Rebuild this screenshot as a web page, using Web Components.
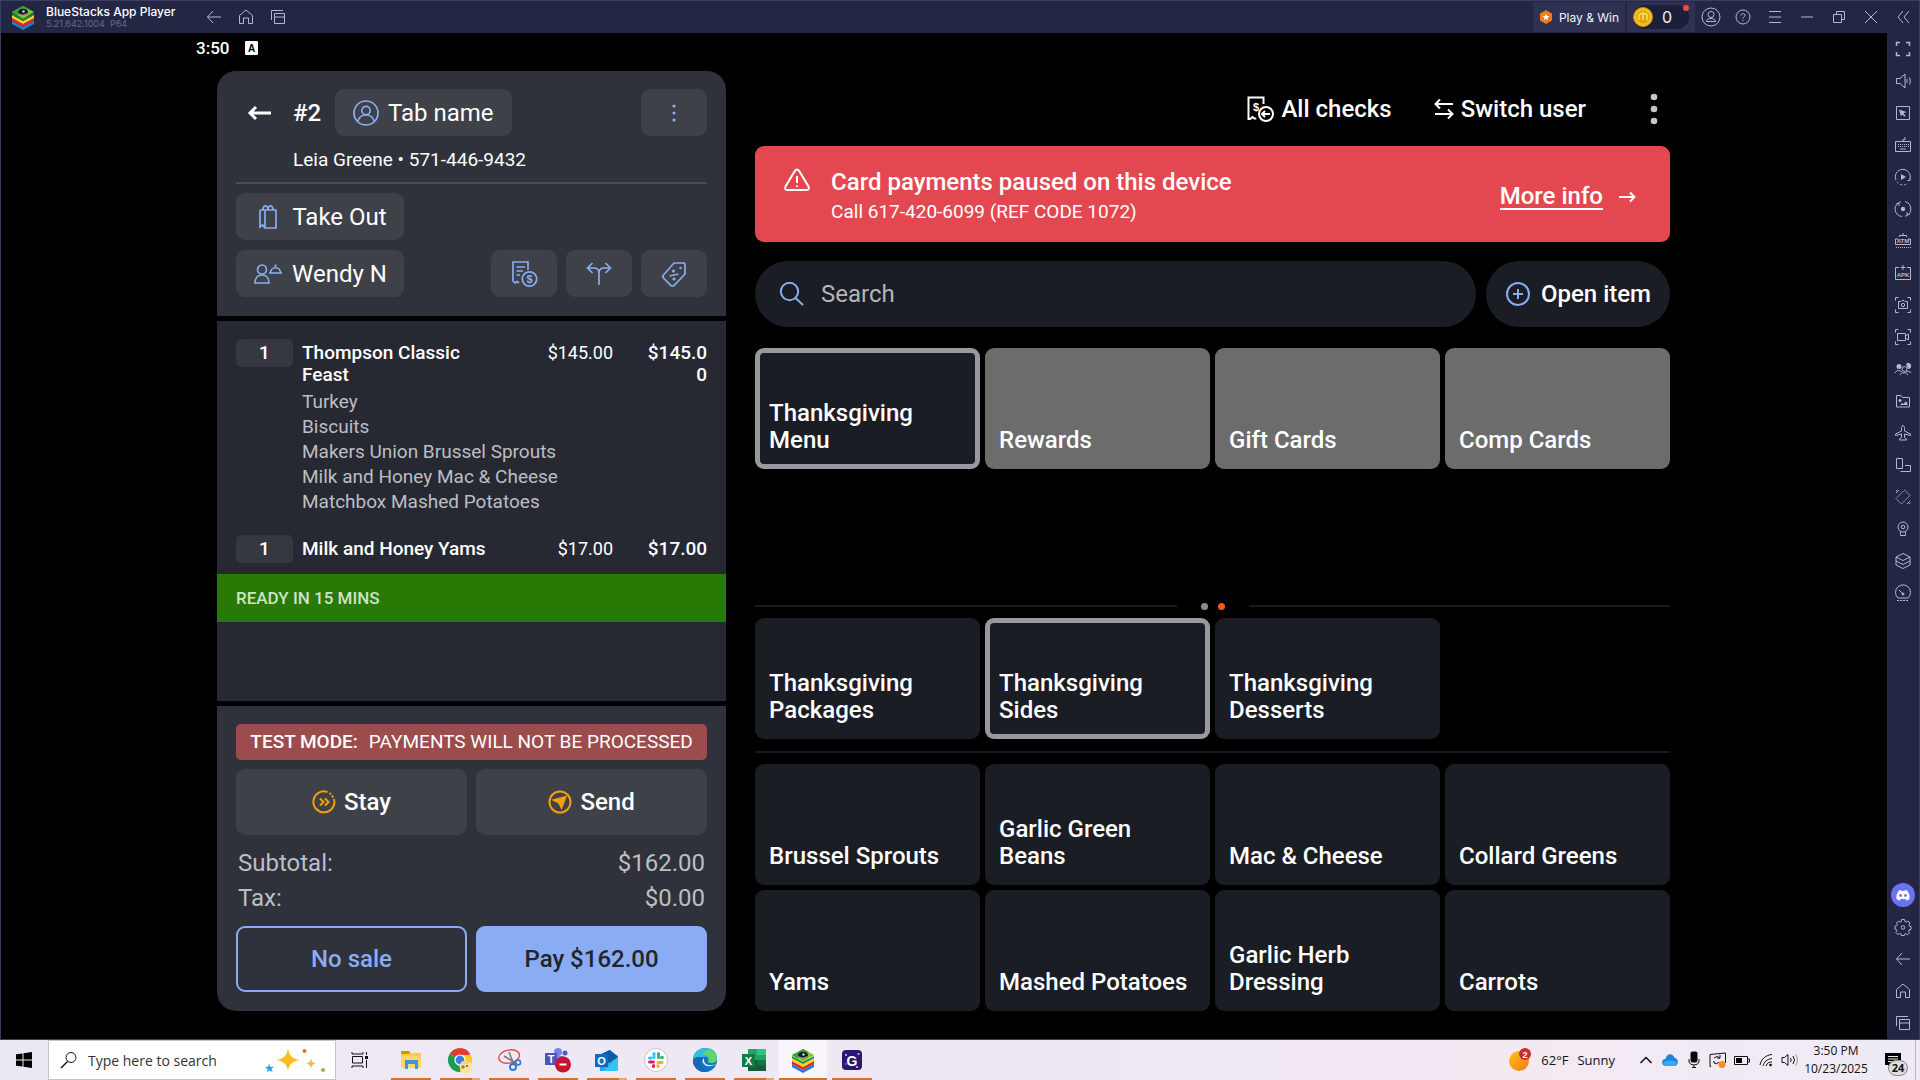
<!DOCTYPE html>
<html lang="en">
<head>
<meta charset="utf-8">
<title>BlueStacks App Player</title>
<style>
  html, body { height: 100%; margin: 0; }
  body {
    display: grid;
    grid-template-rows: 1fr 40px;
    background: #000;
    color: #fff;
    font-family: Roboto, "Liberation Sans", sans-serif;
    --blue: #8aacf3;
    --orange: #f59e0b;
    --chrome: #242744;
    --edge: #3a3d60;
    --panel: #30323b;
    --panel-dark: #272932;
    --button: #3f4149;
    --tile: #1b1d24;
  }
</style>
</head>
<body>
<player-window></player-window>
<task-bar></task-bar>

<script>
// [width, height, markup] for every glyph, drawn at its natural size
const CUBE = '<g stroke="none"><path d="M1 16l11 6 11-6v3l-11 6-11-6z" fill="#1683d8"/><path d="M1 13l11 6 11-6v3l-11 6-11-6z" fill="#e5242b"/><path d="M1 10l11 6 11-6v3l-11 6-11-6z" fill="#ffd21f"/><path d="M1 8l11 6 11-6v2l-11 6-11-6z" fill="#168a3a"/><path d="M12 1l11 6-11 7L1 7z" fill="#7cc92f"/><path d="M12 1L1 7l5 3.500L18 4z" fill="#3aa636"/><ellipse cx="12" cy="7" rx="5" ry="3.200" fill="#161a2c"/><circle cx="12.500" cy="6.500" r="1.200" fill="#cdd6ea"/></g><path d="M7.500 8.500c2 2 6 2 8 0" stroke="#f48cc0"/>';
const ICONS = {
  bluestacks: [24, 25, CUBE],
  navBack: [16, 16, '<path d="M15 8H1.500M7 2L1.500 8 7 14"/>'],
  navHome: [16, 16, '<path d="M1.500 6.500L8 1l6.500 5.500v8h-4V9h-5v5.500h-4z"/>'],
  navRecent: [16, 16, '<path d="M1.500 11V1.500H13M4.500 4.500h10v10h-10zM4.500 8h10"/>'],
  user: [20, 20, '<circle cx="10" cy="10" r="9"/><circle cx="10" cy="7.500" r="3"/><path d="M5.500 14.500c0-2 2-3 4.500-3s4.500 1 4.500 3z"/>'],
  help: [16, 16, '<circle cx="8" cy="8" r="7"/><path d="M6 6.500C6 4 10 4 10 6.300 10 7.700 8 7.800 8 9.600M8 11v1.200"/>'],
  menu: [14, 14, '<path d="M1 1.500h12M1 7h12M1 12.500h12"/>'],
  minimize: [14, 14, '<path d="M1 7h12"/>'],
  restore: [14, 14, '<path d="M1.500 4.500h8v8h-8zM4.500 4V1.500h8v8H10"/>'],
  close: [14, 14, '<path d="M1 1l12 12M13 1L1 13"/>'],
  chevrons: [14, 14, '<path d="M7 1L2 7l5 6M13 1L8 7l5 6"/>'],
  playWin: [14, 14, '<path d="M7 0l6 3.500v7L7 14l-6-3.500v-7z" fill="#f47a1c" stroke="none"/><path d="M7 3.500l1 2.400 2.500.2-2 1.600.7 2.500L7 8.800l-2.200 1.400.7-2.500-2-1.600 2.500-.2z" fill="#fff" stroke="none"/>'],
  coin: [20, 20, '<circle cx="10" cy="10" r="9.500" fill="#f5c21b" stroke="#c98e0c"/><circle cx="10" cy="10" r="6.500" fill="#e2a40f" stroke="none"/><path d="M6 13V8.500c1-3 7-3 8 0V13M10 6v7" stroke="#fbe16a" stroke-width="1.500"/>'],

  fullscreen: [18, 18, '<path d="M2.500 6V2.500H6M12 2.500h3.500V6M15.500 12v3.500H12M6 15.500H2.500V12" stroke-width="1.500"/>'],
  volume: [18, 18, '<path d="M2.500 6.500H6l5-4.500v14l-5-4.500H2.500zM13 7v4M15.500 5.500c1 2 1 5 0 7"/>'],
  pointer: [18, 18, '<path d="M2.500 2.500h13v13h-13z"/><path d="M5 5.500l7.500 2.500-3 1.300 2 2.500-1 1-2.200-2.300L7 12.500z" fill="currentColor" stroke="none"/>'],
  keyboard: [18, 18, '<path d="M1.500 5.500h15v10h-15zM9 5V3.500h2V1"/><path d="M4 8.500h11M4 10.500h11" stroke-dasharray="1 1"/><path d="M6 13h6"/>'],
  replay: [18, 18, '<path d="M2 12A7.500 7.500 0 1 1 16 11"/><path d="M3 14a7.500 7.500 0 0 0 11 1" stroke-dasharray="2 2"/><path d="M7 6l5 3-5 3z" fill="currentColor" stroke="none"/><path d="M13.500 12.500h2.500V10"/>'],
  record: [18, 18, '<path d="M7 1.700A7.500 7.500 0 0 0 8 16.500M11 16.300A7.500 7.500 0 0 0 11 1.700M2.500 3.500h2.500V6M15.500 14.500H13V12"/><circle cx="9" cy="9" r="2.200" fill="currentColor" stroke="none"/>'],
  atm: [18, 18, '<path d="M4 7H1.500v5.500h15V7H14M9 1v2M5.500 5V3.500h7V5"/><path d="M2 15.500h15" stroke-dasharray="1 1"/><text x="9" y="11" class="mini">ATM</text>'],
  apk: [18, 18, '<path d="M5 3.500H1.500v12h15v-12H13M9 1v5M6.500 3.500h5"/><text x="9" y="13" class="mini">APK</text>'],
  camera: [18, 18, '<path d="M1.500 4.500v-3h3M13.500 1.500h3v3M16.500 13.500v3h-3M4.500 16.500h-3v-3M4.500 5.500H7l1-1h2l1 1h2.500v7h-9z"/><circle cx="9" cy="9" r="1.700"/>'],
  video: [18, 18, '<path d="M1.500 4.500v-3h3M13.500 1.500h3v3M16.500 13.500v3h-3M4.500 16.500h-3v-3M3.500 5.500h8v7h-8zM11.500 8l3-2v6l-3-2"/>'],
  multi: [18, 18, '<circle cx="5" cy="6.500" r="2.500" fill="currentColor" stroke="none"/><path d="M1 13c1-3 5-3 7-1M6 15c1-3 7-3 8 0M12 12c2-1 4-1 5 1"/><circle cx="10.500" cy="9" r="2.500"/><path d="M12 4a3 3 0 1 1 2 5z" fill="currentColor" stroke="none"/>'],
  media: [18, 18, '<path d="M2.500 15V3.500H7l1.500 2h7V15z"/><circle cx="6" cy="8.500" r="1.500" fill="currentColor" stroke="none"/><path d="M6 13l2-2 1.500 1 2.500-3 2 4z" fill="currentColor" stroke="none"/>'],
  plane: [18, 18, '<path d="M9 1.500c1 0 1.500 1.500 1.500 3V7l6 3v1.500l-6-1.500v3.500l2 1.500v1h-7v-1l2-1.500V10l-6 1.500V10l6-3V4.500c0-1.500.5-3 1.500-3z"/>'],
  rotate: [18, 18, '<path d="M2.500 2.500h6v10h-6zM11 9.500h5.500v6h-10"/>'],
  shake: [18, 18, '<path d="M10.500 2L16 7.500 7.500 16 2 10.500z" stroke-dasharray="2 1"/><path d="M2 5l3-3M2 2l1 1M13 16l3-3M15.500 16l.5-1"/>'],
  location: [18, 18, '<circle cx="9" cy="7" r="5"/><circle cx="9" cy="7" r="1.800"/><path d="M6.500 11.500v3M11.500 11.500v3M6 15.500h6"/>'],
  layers: [18, 18, '<path d="M9 1.500l7 3.500v8l-7 3.500L2 13V5zM2 5l7 3.500L16 5M2 9l7 3.500L16 9"/>'],
  gauge: [18, 18, '<path d="M4 14a7.500 7.500 0 1 1 10 0zM5 6l4 4"/><path d="M3 16.500h12" stroke-dasharray="2 1"/><circle cx="9" cy="10" r="1" fill="currentColor"/>'],
  discord: [24, 24, '<circle cx="12" cy="12" r="12" fill="#6b73f5" stroke="none"/><path d="M8 7.500l2-.5.6 1h2.800L14 7l2 .5c2 2.500 3 5.500 2.500 8.500-1 .8-2 1.200-3.200 1.400l-.8-1.500h-5l-.8 1.500c-1.200-.2-2.200-.6-3.200-1.400-.5-3 .5-6 2.500-8.500z" fill="#fff" stroke="none"/><circle cx="9.500" cy="12.500" r="1.400" fill="#6b73f5" stroke="none"/><circle cx="14.500" cy="12.500" r="1.400" fill="#6b73f5" stroke="none"/>'],
  settings: [18, 18, '<path d="M7.500 1.500h3l.4 2 1.300.6 1.800-1.100 2 2-1.100 1.800.6 1.300 1.500.4v3l-2 .4-.5 1.100 1.100 1.800-2 2-1.800-1.100-1.100.5-.4 1.300h-3l-.4-1.500-1.300-.6-1.800 1.100-2-2 1.100-1.800-.4-1.100-1.500-.4v-3l1.700-.4.6-1.300L2.600 5l2-2 1.800 1.100 1-.6z"/><circle cx="9" cy="9.500" r="1.800"/>'],

  // point of sale
  back: [24, 16, '<path d="M23 8H2M8 2L2 8l6 6" stroke-width="3"/>'],
  person: [26, 26, '<circle cx="13" cy="13" r="12"/><circle cx="13" cy="10.500" r="4.200"/><path d="M5 21c1-4 4-6 8-6s7 2 8 6"/>'],
  kebab: [4, 18, '<g fill="currentColor" stroke="none"><circle cx="2" cy="2" r="1.600"/><circle cx="2" cy="9" r="1.600"/><circle cx="2" cy="16" r="1.600"/></g>'],
  kebabLarge: [8, 32, '<g fill="currentColor" stroke="none"><circle cx="4" cy="4" r="3.300"/><circle cx="4" cy="16" r="3.300"/><circle cx="4" cy="28" r="3.300"/></g>'],
  bag: [30, 26, '<path d="M7 6h16v18H12V6M7 6v17l2.500-2 2.500 3M10 6c0-6 5-5 5 0M15 6c0-6 5-5 5 0"/>'],
  server: [30, 22, '<circle cx="9" cy="6.500" r="4.500"/><path d="M2 20c0-5 3-8 7-8s7 3 7 8zM16 10h13M17.500 10c0-7 10-7 10 0M22.500 4V1.500"/>'],
  receipt: [28, 28, '<path d="M9 23l-2-1.500L5 23l-2-2V2h15v8M6.500 7H15M6.500 11H13M6.500 15H10"/><circle cx="19.500" cy="19" r="7.200"/><text x="19.500" y="23" class="dollar">$</text>'],
  split: [26, 26, '<path d="M13 24V12c0-3-2-5-5-5H2.500M13 12c0-3 2-5 5-5h5.500M6.500 2l-5 5 5 5M19.500 2l5 5-5 5"/>'],
  discount: [28, 28, '<path d="M14 3h10l1 1v10L14 25.500q-1.500 1-3 0L3.500 18q-1.500-1.500 0-3zM9.500 16l9-2"/><g fill="currentColor" stroke="none"><circle cx="13.500" cy="11" r="1.600"/><circle cx="14" cy="19" r="1.600"/><circle cx="20.500" cy="8" r="1.200"/></g>'],
  stay: [24, 24, '<path d="M15.500 2A10.500 10.500 0 1 0 22 9M17.500 3l1.500 1.200M20 5.500l1.200 2M8 8.500l3.500 3.500L8 15.500M13 8.500l3.500 3.500-3.500 3.500"/>'],
  send: [24, 24, '<circle cx="12" cy="12" r="10.500"/><path d="M17.500 7l-4 10.500-2.500-5L6 10z" fill="currentColor"/>'],
  checks: [28, 28, '<path d="M9 24l-2.500-2L4 24H2.500V2.500h15V9M9 24l1-1"/><text x="10" y="16" class="dollar">$</text><circle cx="20" cy="19" r="7"/><path d="M24 19h-8M19 16l-3 3 3 3"/>'],
  swap: [20, 22, '<path d="M19 6H2M6 1.500L1.500 6 6 10.500M1 16h17M14 11.500l4.500 4.500-4.500 4.500"/>'],
  warning: [28, 24, '<path d="M11.500 3.500q2.500-4 5 0l9 15q1.500 3.500-2 3.500h-19q-3.500 0-2-3.500zM14 8v7M14 17.500v1.500"/>'],
  arrow: [18, 12, '<path d="M1 6h16M12 1.500L16.500 6 12 10.500"/>'],
  search: [26, 26, '<circle cx="10.500" cy="10.500" r="8.700"/><path d="M16.500 17l7.500 7"/>'],
  plus: [26, 26, '<circle cx="13" cy="13" r="11"/><path d="M13 8v10M8 13h10"/>'],
  keypad: [13, 14, '<rect width="13" height="14" rx="1" fill="#fff" stroke="none"/><text x="6.500" y="10.500" class="badge">A</text>'],

  // taskbar
  windows: [16, 16, '<path d="M0 2.300L6.500 1.400V7.500H0zM7.500 1.200L16 0v7.500H7.500zM0 8.500h6.500v6.100L0 13.700zM7.500 8.500H16V16l-8.500-1.200z" fill="#000" stroke="none"/>'],
  magnifier: [18, 18, '<circle cx="11" cy="6.500" r="5"/><path d="M7.500 10.500L1 17" stroke-width="1.500"/>'],
  sparkles: [62, 26, '<g stroke="none"><path d="M24 1c1 8 4 10 11 12-7 2-10 4-11 11-1-7-4-9-11-11 7-2 10-4 11-12z" fill="#fbbc1d"/><path d="M47 11c.5 3.500 2 5 5 5.500-3 .5-4.500 2-5 5-.5-3-2-4.500-5-5 3-.5 4.500-2 5-5.500z" fill="#fbb93a"/><path d="M5 17l1.500 3 3.500-.5-2.500 2.500 1 3-3-1.500L3 25l.5-3L1 20l3-.3z" fill="#22a7f0"/><circle cx="40.500" cy="4" r="2" fill="#f2653a"/><circle cx="59" cy="23" r="2" fill="#86c440"/></g>'],
  taskview: [18, 18, '<path d="M1 1v2h11V1M1 17v-2h11v2M1.500 5.500h10v6.500h-10zM15.500 1v3M15.500 9v8"/><path d="M14 5h3v3h-3z" fill="#111" stroke="none"/>'],
  folder: [22, 20, '<g stroke="none"><path d="M1 1h8l2 2h10v15H1z" fill="#ffc943"/><path d="M1 1h8l1 2-1 1H1z" fill="#d9930c"/><path d="M1 6h20v12H1z" fill="#ffd766"/><path d="M5 19v-9h13v9h-3v-5H8v5z" fill="#3f95dd"/></g>'],
  chrome: [24, 24, '<g stroke="none"><path d="M12 12L1.600 6A12 12 0 0 1 22.400 6z" fill="#e33b2e"/><path d="M12 12L1.600 6A12 12 0 0 0 12 24l4-8z" fill="#1d9d50"/><path d="M12 12V7h11A12 12 0 0 1 12 24z" fill="#fccb1b"/><circle cx="12" cy="12" r="5.600" fill="#fff"/><circle cx="12" cy="12" r="4.400" fill="#3c7ded"/><path d="M11 18q2-5 6-4.500 5-1 7 4 1 8-6 8.500-6 0-5-5z" fill="#f7e5a4"/><path d="M13 14q4-3 8 0l-1 2h-6z" fill="#f3d47c"/><circle cx="15" cy="19" r="1.800" fill="#b7743b"/><circle cx="19" cy="18" r="1" fill="#74462b"/></g>'],
  snip: [24, 24, '<ellipse cx="12" cy="8.500" rx="10.500" ry="6.500" stroke="#e2473f" stroke-width="1.300" transform="rotate(-12 12 8)"/><path d="M12 4l5 13M7 8l13 8" stroke="#777" stroke-width="1.500"/><circle cx="16" cy="19" r="3" stroke="#267ec4" stroke-width="1.800"/><circle cx="21" cy="14.500" r="2.500" stroke="#267ec4" stroke-width="1.600"/>'],
  teams: [26, 26, '<g stroke="none"><circle cx="13" cy="5" r="4" fill="#7b83eb"/><circle cx="20" cy="6" r="2.500" fill="#5059c9"/><path d="M8 9h11v10q-5 4-9 0z" fill="#7b83eb"/><path d="M0 6h12v12H0z" fill="#4b53bc"/><text x="6" y="15.500" class="app">T</text><circle cx="18" cy="17.500" r="8" fill="#c4162e"/><path d="M14.500 16.500h7v2h-7z" fill="#fff"/></g>'],
  outlook: [24, 22, '<g stroke="none"><path d="M4 7l10-6 9 6v13q0 2-2 2H5z" fill="#28a8ea"/><path d="M6 5l9-4 8 7-9 6z" fill="#0f5ba8"/><path d="M23 8v12q0 2-2 2H8z" fill="#37c2f5"/><path d="M0 5h13v13H0z" fill="#0f6cbd"/><text x="6.500" y="15.500" class="app">O</text></g>'],
  slack: [24, 24, '<circle cx="12" cy="12" r="11.500" fill="#fff" stroke="#c9c4ce"/><g stroke-width="3" stroke-linecap="round"><path d="M10 5.500v4M5.500 10H7" stroke="#36c5f0"/><path d="M14.500 5.500v4M17.500 9.500h1" stroke="#2eb67d"/><path d="M5.500 14h4M9.500 17.500v1" stroke="#e01e5a"/><path d="M14 14.500h4M14 17.500v1" stroke="#ecb22e"/></g>'],
  edge: [24, 24, '<g stroke="none"><circle cx="12" cy="12" r="12" fill="#1672c7"/><path d="M0 11C1-3 24-4 24 10c0 5-5 6-9 4 2-4-2-6-5-5-4 0-8 0-10 2z" fill="#35bddd"/><path d="M15 1c8 2 10 8 8 12-2 3-6 2-8 1 3-5-1-8-6-7z" fill="#5fd56a"/><path d="M10 10c-4 4-2 12 6 13C6 27-1 18 0 12c2-3 7-4 10-2z" fill="#1767b3"/><path d="M11 10c-1 6 4 9 12 6-4 3-10 3-12 0-2-2-2-4 0-6z" fill="#edf7fb"/></g>'],
  excel: [24, 22, '<g stroke="none"><path d="M6 0h18v22H6z" fill="#21a366"/><path d="M15 0h9v6h-9z" fill="#33c481"/><path d="M6 11h18v11H6z" fill="#185c37"/><path d="M15 11h9v5h-9z" fill="#107c41"/><path d="M0 5h13v13H0z" fill="#107c41"/><text x="6.500" y="15.500" class="app">X</text></g>'],
  gapp: [20, 20, '<rect width="20" height="20" rx="4" fill="#2d1670" stroke="none"/><g fill="#d9caff" stroke="none"><circle cx="4" cy="5" r="1"/><circle cx="16.500" cy="4" r="1"/><circle cx="4" cy="14" r=".7"/><circle cx="15" cy="17" r="1"/></g><text x="10" y="15.500" class="app big">G</text>'],
  sun: [24, 24, '<defs><linearGradient id="s" x2="1" y2="1"><stop stop-color="#ffc318"/><stop offset="1" stop-color="#f27a13"/></linearGradient></defs><circle cx="11" cy="13" r="10" fill="url(#s)" stroke="none"/><circle cx="17" cy="6" r="6" fill="#c4302b" stroke="none"/><text x="17" y="9.500" class="count">2</text>'],
  caret: [14, 14, '<path d="M1.500 10L7 4.500l5.500 5.500" stroke-width="1.500"/>'],
  cloud: [16, 12, '<path d="M4 12C-1 12-1 5 3.500 5 5-1 11-1 12.500 4 17 4 17 12 12 12z" fill="#1683e2" stroke="none"/><path d="M1 9q5-5 14-1-1 4-4 4H4q-2 0-3-3z" fill="#37a8f5" stroke="none"/>'],
  mic: [12, 18, '<rect x="3" y="1" width="6" height="10" rx="1" fill="#000"/><path d="M1 8v3q1 3 5 3t5-3V8M6 14v3M4 16.500h4"/>'],
  update: [18, 16, '<path d="M2 14.500h-1V2.500L16.500 1v10M5 6q3-3 6 0M11 3v3H8M5 9v2q3 2 5-1"/><circle cx="13" cy="12.500" r="3.500" fill="#f8930e" stroke="none"/>'],
  battery: [16, 12, '<path d="M.5 2.500h13v8H.5zM14 5h1.500v3H14"/><path d="M2 4h6v5H2z" fill="#000" stroke="none"/>'],
  wifi: [14, 14, '<path d="M1 12C2 6 7 2 13 1.500M4 13c1-4 4-7 9-7.500M7 13c1-3 3-4 6-4"/><circle cx="11.500" cy="12" r="1.300" fill="#000" stroke="none"/>'],
  sound: [18, 14, '<path d="M1 4.500h2.500L7 1.500v11L3.500 9.500H1zM9.500 5q1.500 2 0 4M12 3q3 4 0 8"/><path d="M14.500 1.500q4 5.500 0 11" stroke="#999"/>'],
  notes: [16, 15, '<path d="M0 0h16v12H6v3l-3-3H0z" fill="#000" stroke="none"/><path d="M3 3.500h10M3 6h10M3 8.500h7" stroke="#eee"/>'],
};

class GlyphIcon extends HTMLElement {
  static get observedAttributes() { return ['name']; }
  constructor() {
    super();
    this.attachShadow({ mode: 'open' });
  }
  attributeChangedCallback() {
    const [w, h, body] = ICONS[this.getAttribute('name')];
    this.shadowRoot.innerHTML = `
      <style>
        :host { display: inline-flex; flex: none; }
        svg { display: block; overflow: visible; stroke-width: var(--stroke, 1); }
        text { stroke: none; text-anchor: middle; font-family: "Liberation Sans", sans-serif; font-weight: 700; }
        .mini { font-size: 6px; fill: currentColor; }
        .dollar { font-size: 11px; fill: currentColor; }
        .badge { font-size: 10px; fill: #000; }
        .app { font-size: 11px; fill: #fff; }
        .app.big { font-size: 14px; }
        .count { font-size: 9px; fill: #fff; }
      </style>
      <svg width="${w}" height="${h}" viewBox="0 0 ${w} ${h}" fill="none" stroke="currentColor" aria-hidden="true">${body}</svg>
    `;
  }
}
customElements.define('glyph-icon', GlyphIcon);

// shared base: renders the subclass template once
class View extends HTMLElement {
  connectedCallback() {
    if (this.shadowRoot) return;
    this.attachShadow({ mode: 'open' });
    this.shadowRoot.innerHTML = `
      <style>
        * { box-sizing: border-box; }
        button, input { font: inherit; color: inherit; border: 0; margin: 0; padding: 0; background: none; }
        button { cursor: pointer; }
      </style>
      ${this.render()}
    `;
  }
}

const iconButton = (name, label) => `<button aria-label="${label}"><glyph-icon name="${name}"></glyph-icon></button>`;

class PlayerTitle extends View {
  render() {
    return `
      <style>
        :host {
          display: flex;
          align-items: center;
          height: 33px;
          background: var(--chrome);
          border-top: 1px solid var(--edge);
          color: #b4b7d4;
          font-family: Inter, sans-serif;
          box-sizing: border-box;
        }
        .logo { margin: 0 11px 0 10px; }
        .name { width: 152px; }
        .name b { display: block; font-size: 12px; line-height: 14px; font-weight: 500; color: #fff; }
        .name small { display: block; font-size: 9px; line-height: 10px; color: #676a8c; }
        nav, .tools { display: flex; }
        .tools { margin-left: auto; align-items: center; }
        nav button, .tools > button { width: 32px; height: 32px; display: grid; place-items: center; }
        .play, .coins { display: flex; align-items: center; height: 30px; background: #2e3151; color: #f1f1f8; }
        .tools .play { display: flex; width: 92px; justify-content: center; gap: 6px; margin-right: 2px; height: 30px; font-size: 12px; }
        .coins { width: 68px; padding: 0 6px; }
        .coins span { position: relative; flex: 1; height: 24px; display: flex; align-items: center; gap: 9px; background: #1c1f3a; border-radius: 12px; font-size: 16px; }
        .coins i { position: absolute; right: 0; top: 0; width: 6px; height: 6px; border-radius: 50%; background: #ef4f3c; }
      </style>
      <glyph-icon class="logo" name="bluestacks"></glyph-icon>
      <div class="name"><b>BlueStacks App Player</b><small>5.21.642.1004&nbsp; P64</small></div>
      <nav>
        ${iconButton('navBack', 'Back')}
        ${iconButton('navHome', 'Home')}
        ${iconButton('navRecent', 'Recent apps')}
      </nav>
      <div class="tools">
        <button class="play"><glyph-icon name="playWin"></glyph-icon>Play &amp; Win</button>
        <div class="coins"><span><glyph-icon name="coin"></glyph-icon>0<i></i></span></div>
        ${iconButton('user', 'Account')}
        ${iconButton('help', 'Help')}
        ${iconButton('menu', 'Menu')}
        ${iconButton('minimize', 'Minimize')}
        ${iconButton('restore', 'Restore')}
        ${iconButton('close', 'Close')}
        ${iconButton('chevrons', 'Collapse toolbar')}
      </div>
    `;
  }
}
customElements.define('player-title', PlayerTitle);

class PlayerTools extends View {
  render() {
    const top = ['fullscreen', 'volume', 'pointer', 'keyboard', 'replay', 'record', 'atm', 'apk', 'camera',
      'video', 'multi', 'media', 'plane', 'rotate', 'shake', 'location', 'layers', 'gauge'];
    const bottom = ['discord', 'settings', 'navBack', 'navHome', 'navRecent'];
    const list = names => names.map(n => iconButton(n, n)).join('');
    return `
      <style>
        :host {
          display: flex;
          flex-direction: column;
          justify-content: space-between;
          background: var(--chrome);
          color: #b4b7d4;
        }
        button { display: grid; place-items: center; width: 32px; height: 32px; }
      </style>
      <div>${list(top)}</div>
      <div>${list(bottom)}</div>
    `;
  }
}
customElements.define('player-tools', PlayerTools);

class PosButton extends View {
  render() {
    return `
      <style>
        :host { display: block; }
        button {
          display: flex;
          align-items: center;
          justify-content: center;
          gap: 9px;
          width: 100%;
          height: 47px;
          padding: 0 18px;
          border-radius: 9px;
          background: var(--button);
          font-size: 24px;
          white-space: nowrap;
        }
        ::slotted([slot=icon]) { color: var(--blue); --stroke: 1.7; }
        :host([big]) button { height: 66px; gap: 8px; font-weight: 500; }
        :host([big]) ::slotted([slot=icon]) { color: var(--orange); --stroke: 2; }
        :host([square]) button { width: 66px; gap: 0; padding: 0; }
        :host([outline]) button { background: none; border: 2px solid var(--blue); color: var(--blue); }
        :host([primary]) button { background: var(--blue); color: #22252e; }
      </style>
      <button aria-label="${this.getAttribute('label') || this.textContent.trim()}"><slot name="icon"></slot><slot></slot></button>
    `;
  }
}
customElements.define('pos-button', PosButton);

class OrderLine extends View {
  render() {
    return `
      <style>
        :host {
          display: grid;
          grid-template-columns: 57px 1fr 80px 85px;
          column-gap: 9px;
          font-size: 19px;
          line-height: 22px;
        }
        .qty { display: grid; place-items: center; height: 28px; border-radius: 5px; background: #363841; }
        .name, .total, .qty { font-weight: 500; }
        .name, .price, .total { padding-top: 3px; }
        .name { max-width: 180px; }
        :host([wide]) .name { max-width: none; }
        .price, .total { text-align: right; }
        .price { font-size: 18px; }
        .total { overflow-wrap: anywhere; padding-left: 21px; }
        .mods { grid-column: 2 / -1; margin-top: 3px; color: #bdbec2; line-height: 25px; }
        :host([wide]) .mods { display: none; }
      </style>
      <span class="qty">${this.getAttribute('qty')}</span>
      <span class="name">${this.getAttribute('name')}</span>
      <span class="price">${this.getAttribute('price')}</span>
      <span class="total">${this.getAttribute('total')}</span>
      <div class="mods"><slot></slot></div>
    `;
  }
}
customElements.define('order-line', OrderLine);

class OrderPanel extends View {
  render() {
    return `
      <style>
        :host { display: flex; flex-direction: column; gap: 5px; border-radius: 19px; overflow: hidden; }
        header, footer { background: var(--panel); padding: 18px 19px 19px; }
        .row { display: flex; align-items: center; }
        .back { display: grid; place-items: center; width: 47px; height: 47px; }
        .number { width: 52px; padding-left: 10px; font-size: 24px; font-weight: 500; }
        .end { margin-left: auto; }
        .guest { margin: 12px 0 11px 57px; font-size: 19px; line-height: 23px; }
        hr { border: 0; height: 2px; margin: 0 0 9px; background: #4a4c56; }
        .actions { margin-top: 10px; gap: 9px; }
        .type { width: 168px; }
        .items { flex: 1; background: var(--panel-dark); }
        .items order-line { margin: 18px 19px 0; }
        .items order-line + order-line { margin-top: 21px; }
        .ready { margin-top: 11px; padding: 0 19px; background: #287906; color: #cfe2c8; font-size: 17px; line-height: 48px; font-weight: 500; }
        .test { display: flex; justify-content: center; gap: 11px; border-radius: 5px; background: #9c4c4d; font-size: 19px; line-height: 36px; white-space: nowrap; }
        .test b { font-weight: 500; }
        .pair { display: grid; grid-template-columns: 1fr 1fr; gap: 9px; }
        footer .pair { margin-top: 9px; }
        dl { margin: 11px 2px 10px; font-size: 24px; line-height: 35px; color: #bdbec2; }
        dl + .pair { margin-top: 0; }
        dl div { display: flex; justify-content: space-between; }
        dd { margin: 0; }
      </style>
      <header>
        <div class="row">
          <button class="back" aria-label="Back"><glyph-icon name="back"></glyph-icon></button>
          <span class="number">#2</span>
          <pos-button><glyph-icon slot="icon" name="person"></glyph-icon>Tab name</pos-button>
          <pos-button class="end" square label="Check options"><glyph-icon slot="icon" name="kebab"></glyph-icon></pos-button>
        </div>
        <div class="guest">Leia Greene • 571-446-9432</div>
        <hr>
        <div class="row"><pos-button class="type"><glyph-icon slot="icon" name="bag"></glyph-icon>Take Out</pos-button></div>
        <div class="row actions">
          <pos-button class="type"><glyph-icon slot="icon" name="server"></glyph-icon>Wendy N</pos-button>
          <pos-button class="end" square label="Payments"><glyph-icon slot="icon" name="receipt"></glyph-icon></pos-button>
          <pos-button square label="Split"><glyph-icon slot="icon" name="split"></glyph-icon></pos-button>
          <pos-button square label="Discounts"><glyph-icon slot="icon" name="discount"></glyph-icon></pos-button>
        </div>
      </header>
      <section class="items">
        <order-line qty="1" name="Thompson Classic Feast" price="$145.00" total="$145.00">
          <div>Turkey</div>
          <div>Biscuits</div>
          <div>Makers Union Brussel Sprouts</div>
          <div>Milk and Honey Mac &amp; Cheese</div>
          <div>Matchbox Mashed Potatoes</div>
        </order-line>
        <order-line wide qty="1" name="Milk and Honey Yams" price="$17.00" total="$17.00"></order-line>
        <div class="ready">READY IN 15 MINS</div>
      </section>
      <footer>
        <div class="test"><b>TEST MODE:</b><span>PAYMENTS WILL NOT BE PROCESSED</span></div>
        <div class="pair">
          <pos-button big><glyph-icon slot="icon" name="stay"></glyph-icon>Stay</pos-button>
          <pos-button big><glyph-icon slot="icon" name="send"></glyph-icon>Send</pos-button>
        </div>
        <dl>
          <div><dt>Subtotal:</dt><dd>$162.00</dd></div>
          <div><dt>Tax:</dt><dd>$0.00</dd></div>
        </dl>
        <div class="pair">
          <pos-button big outline>No sale</pos-button>
          <pos-button big primary>Pay $162.00</pos-button>
        </div>
      </footer>
    `;
  }
}
customElements.define('order-panel', OrderPanel);

class AlertBanner extends View {
  render() {
    return `
      <style>
        :host {
          display: flex;
          align-items: center;
          min-height: 96px;
          padding: 5px 34px 0 28px;
          border-radius: 9px;
          background: #e34850;
          box-sizing: border-box;
        }
        .sign { align-self: flex-start; margin: 17px 20px 0 0; --stroke: 2; }
        h2 { margin: 0; font-size: 24px; line-height: 29px; font-weight: 500; }
        p { margin: 0; font-size: 19px; line-height: 29px; }
        a { display: flex; align-items: center; gap: 15px; margin-left: auto; color: inherit; font-size: 24px; font-weight: 500; text-decoration: none; --stroke: 2; }
        a span { border-bottom: 2px solid; line-height: 24px; }
      </style>
      <glyph-icon class="sign" name="warning"></glyph-icon>
      <div><h2><slot name="title"></slot></h2><p><slot></slot></p></div>
      <a href="#info"><span>More info</span><glyph-icon name="arrow"></glyph-icon></a>
    `;
  }
}
customElements.define('alert-banner', AlertBanner);

class MenuTile extends View {
  render() {
    return `
      <style>
        :host { display: block; }
        button {
          display: flex;
          align-items: flex-end;
          width: 100%;
          height: 121px;
          padding: 14px 14px 15px;
          border-radius: 9px;
          background: var(--tile);
          font-size: 24px;
          line-height: 27px;
          font-weight: 500;
          text-align: left;
        }
        :host([muted]) button { background: #6c6c6c; }
        :host([selected]) button { box-shadow: inset 0 0 0 5px #98999e; }
      </style>
      <button><slot></slot></button>
    `;
  }
}
customElements.define('menu-tile', MenuTile);

class MenuBoard extends View {
  render() {
    return `
      <style>
        :host { display: flex; flex-direction: column; }
        nav { display: flex; align-items: center; justify-content: flex-end; height: 75px; gap: 42px; }
        nav button { display: flex; align-items: center; gap: 7px; font-size: 24px; font-weight: 500; --stroke: 2; }
        nav .more { margin: 0 12px 0 22px; color: #c4c5c8; }
        .find { display: grid; grid-template-columns: 1fr 184px; gap: 10px; margin: 19px 0 21px; }
        .find label, .find button { display: flex; align-items: center; height: 66px; border-radius: 33px; background: var(--tile); font-size: 24px; --stroke: 2; }
        .find label { padding: 0 24px; gap: 16px; }
        .find button { justify-content: center; gap: 10px; font-weight: 500; white-space: nowrap; }
        .find glyph-icon { color: var(--blue); }
        .find input { flex: 1; min-width: 0; font-size: 24px; outline: 0; }
        .find input::placeholder { color: #b4b5b8; opacity: 1; }
        .grid { display: grid; grid-template-columns: repeat(4, 1fr); gap: 5px; }
        .pager { display: flex; align-items: center; gap: 10px; height: 12px; margin: 131px 0 6px; }
        .pager::before, .pager::after { content: ''; flex: 1; height: 2px; background: #17191f; }
        .pager::before { margin-right: 14px; }
        .pager::after { margin-left: 14px; }
        .pager i { width: 7px; height: 7px; border-radius: 50%; background: #8b8c90; }
        .pager i.on { background: #f2571c; }
        hr { width: 100%; height: 2px; margin: 12px 0 11px; border: 0; background: #17191f; }
      </style>
      <nav>
        <button><glyph-icon name="checks"></glyph-icon>All checks</button>
        <button><glyph-icon name="swap"></glyph-icon>Switch user</button>
        <button class="more" aria-label="More"><glyph-icon name="kebabLarge"></glyph-icon></button>
      </nav>
      <alert-banner><span slot="title">Card payments paused on this device</span>Call 617-420-6099 (REF CODE 1072)</alert-banner>
      <div class="find">
        <label><glyph-icon name="search"></glyph-icon><input type="text" placeholder="Search" aria-label="Search"></label>
        <button><glyph-icon name="plus"></glyph-icon>Open item</button>
      </div>
      <div class="grid">
        <menu-tile selected>Thanksgiving Menu</menu-tile>
        <menu-tile muted>Rewards</menu-tile>
        <menu-tile muted>Gift Cards</menu-tile>
        <menu-tile muted>Comp Cards</menu-tile>
      </div>
      <div class="pager"><i></i><i class="on"></i></div>
      <div class="grid">
        <menu-tile>Thanksgiving Packages</menu-tile>
        <menu-tile selected>Thanksgiving Sides</menu-tile>
        <menu-tile>Thanksgiving Desserts</menu-tile>
      </div>
      <hr>
      <div class="grid">
        <menu-tile>Brussel Sprouts</menu-tile>
        <menu-tile>Garlic Green Beans</menu-tile>
        <menu-tile>Mac &amp; Cheese</menu-tile>
        <menu-tile>Collard Greens</menu-tile>
        <menu-tile>Yams</menu-tile>
        <menu-tile>Mashed Potatoes</menu-tile>
        <menu-tile>Garlic Herb Dressing</menu-tile>
        <menu-tile>Carrots</menu-tile>
      </div>
    `;
  }
}
customElements.define('menu-board', MenuBoard);

class PlayerWindow extends View {
  render() {
    return `
      <style>
        :host {
          display: grid;
          grid-template: auto 1fr / 1fr 32px;
          border: solid var(--edge);
          border-width: 0 1px 1px;
          min-height: 0;
          background: #000;
        }
        player-title { grid-column: 1 / -1; }
        .stage { display: flex; flex-direction: column; width: 100%; max-width: 1496px; margin: 0 auto; }
        .status { display: flex; align-items: center; gap: 16px; height: 38px; padding-bottom: 9px; font-size: 17px; font-weight: 500; }
        .pos { flex: 1; display: grid; grid-template-columns: 7fr 12.58fr; gap: 29px; padding: 0 22px 28px 21px; }
      </style>
      <player-title></player-title>
      <div class="stage">
        <div class="status">3:50<glyph-icon name="keypad"></glyph-icon></div>
        <div class="pos">
          <order-panel></order-panel>
          <menu-board></menu-board>
        </div>
      </div>
      <player-tools></player-tools>
    `;
  }
}
customElements.define('player-window', PlayerWindow);

class TaskBar extends View {
  render() {
    const apps = ['folder', 'chrome', 'snip', 'teams', 'outlook', 'slack', 'edge', 'excel', 'bluestacks', 'gapp'];
    const stacked = ['chrome', 'outlook', 'excel'];
    const app = n => `<button class="app ${n === 'bluestacks' ? 'active' : ''} ${stacked.includes(n) ? 'stacked' : ''}" aria-label="${n}"><glyph-icon name="${n}"></glyph-icon></button>`;
    return `
      <style>
        :host {
          display: flex;
          align-items: stretch;
          background: linear-gradient(90deg, #ece9f5, #efe8f4 55%, #f3e9f3 80%, #eeebf4);
          color: #111;
          font-family: "Open Sans", "Noto Sans", sans-serif;
          font-size: 14px;
        }
        button { display: grid; place-items: center; }
        .start { width: 48px; }
        label { display: flex; align-items: center; width: 288px; padding: 0 9px 0 11px; background: #fff; border: 1px solid #c6c4ca; }
        label input { flex: 1; min-width: 0; margin-left: 10px; outline: 0; }
        label input::placeholder { color: #333; opacity: 1; }
        .view { width: 48px; margin-right: 3px; }
        .apps { display: flex; gap: 1px; }
        .app { position: relative; width: 48px; }
        .app::after { content: ''; position: absolute; left: 4px; right: 4px; bottom: 0; height: 2px; background: #cd7431; }
        .app.stacked::after { background: linear-gradient(90deg, #cd7431 80%, #dfa67c 80%); }
        .app.active { background: #f9f6fb; }
        .app.active::after { left: 0; right: 0; }
        .tray { display: flex; align-items: center; margin-left: auto; }
        .weather { display: flex; align-items: center; gap: 9px; margin-right: 19px; font-size: 13px; }
        .icons { display: grid; grid-auto-flow: column; grid-auto-columns: 24px; place-items: center; }
        .clock { width: 68px; text-align: center; font-size: 12px; line-height: 18px; }
        .notes { position: relative; width: 45px; height: 40px; }
        .notes b { position: absolute; left: 18px; bottom: 4px; width: 20px; border: 1px solid #888; border-radius: 9px; background: #ddd; font-size: 11px; line-height: 14px; }
        .peek { width: 5px; height: 40px; border-left: 1px solid #bcb7c2; }
      </style>
      <button class="start" aria-label="Start"><glyph-icon name="windows"></glyph-icon></button>
      <label><glyph-icon name="magnifier"></glyph-icon><input type="text" placeholder="Type here to search" aria-label="Type here to search"><glyph-icon name="sparkles"></glyph-icon></label>
      <button class="view" aria-label="Task view"><glyph-icon name="taskview"></glyph-icon></button>
      <div class="apps">${apps.map(app).join('')}</div>
      <div class="tray">
        <button class="weather"><glyph-icon name="sun"></glyph-icon><span>62°F</span><span>Sunny</span></button>
        <div class="icons">
          ${['caret', 'cloud', 'mic', 'update', 'battery', 'wifi', 'sound'].map(n => iconButton(n, n)).join('')}
        </div>
        <div class="clock">3:50 PM<br>10/23/2025</div>
        <button class="notes" aria-label="Notifications"><glyph-icon name="notes"></glyph-icon><b>24</b></button>
        <span class="peek"></span>
      </div>
    `;
  }
}
customElements.define('task-bar', TaskBar);
</script>
</body>
</html>
